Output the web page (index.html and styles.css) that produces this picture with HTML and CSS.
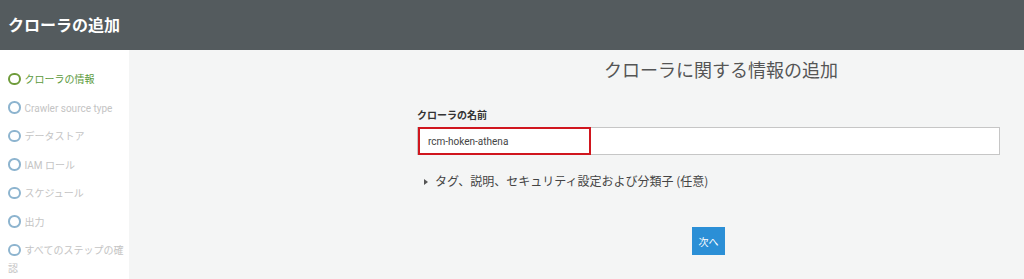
FILE: index.html
```html
<!DOCTYPE html>
<html lang="ja">
<head>
  <meta charset="UTF-8">
  <title>クローラの追加</title>
  <link rel="stylesheet" href="styles.css">
</head>
<body>
  <header class="page-header">
    <h1>クローラの追加</h1>
  </header>
  <div class="page-body">
    <nav class="steps">
      <div class="step active"><span class="dot"></span>クローラの情報</div>
      <div class="step"><span class="dot"></span>Crawler source type</div>
      <div class="step"><span class="dot"></span>データストア</div>
      <div class="step"><span class="dot"></span>IAM ロール</div>
      <div class="step"><span class="dot"></span>スケジュール</div>
      <div class="step"><span class="dot"></span>出力</div>
      <div class="step"><span class="dot"></span>すべてのステップの確認</div>
    </nav>
    <main class="content">
      <div class="form">
        <h2>クローラに関する情報の追加</h2>
        <label class="field-label">クローラの名前</label>
        <div class="field">
          <input type="text" value="rcm-hoken-athena">
          <span class="highlight"></span>
        </div>
        <div class="expander"><span class="caret"></span>タグ、説明、セキュリティ設定および分類子 (任意)</div>
        <div class="actions">
          <button class="btn-next">次へ</button>
        </div>
      </div>
    </main>
  </div>
</body>
</html>
```

FILE: styles.css
```css
body {
  margin: 0;
  font-family: "Noto Sans CJK JP", "Noto Sans", sans-serif;
  color: #444;
  background-color: #f4f5f5;
}

.page-header {
  height: 50px;
  background-color: #545b5e;
  display: flex;
  align-items: center;
  padding-left: 8px;
}

.page-header h1 {
  margin: 0;
  font-size: 16px;
  font-weight: bold;
  color: #fff;
  line-height: 1;
  margin-top: -3px;
}

.page-body {
  display: flex;
  height: 229px;
}

.steps {
  width: 121px;
  flex-shrink: 0;
  background-color: #fff;
  padding: 16px 0 0 8px;
  font-size: 10px;
}

.step {
  line-height: 18px;
  padding: 5px 0;
  margin-bottom: 0.5px;
  color: #c4c4c4;
  font-family: Roboto, "Noto Sans CJK JP", sans-serif;
}

.dot {
  display: inline-block;
  width: 8.5px;
  height: 8.5px;
  border: 2px solid #8db4cf;
  border-radius: 50%;
  margin-right: 4px;
  vertical-align: -2px;
}

.step.active {
  color: #5c9a3c;
}

.step.active .dot {
  border-color: #6e9b3a;
}

.content {
  flex: 1;
  padding: 5px 0 0 288px;
}

.form {
  width: 583px;
}

.form h2 {
  margin: 0;
  padding-left: 25px;
  text-align: center;
  font-size: 18px;
  font-weight: normal;
  line-height: 28px;
  color: #555;
}

.field-label {
  display: block;
  margin-top: 25px;
  font-size: 10px;
  font-weight: bold;
  line-height: 14px;
  color: #333;
}

.field {
  position: relative;
  margin-top: 5px;
}

.field input {
  display: block;
  width: 100%;
  height: 28px;
  box-sizing: border-box;
  border: 1px solid #c6c6c6;
  background-color: #fff;
  padding: 0 10px;
  font-family: Roboto, sans-serif;
  font-size: 10px;
  color: #444;
}

.highlight {
  position: absolute;
  left: 1px;
  top: 0;
  width: 173px;
  height: 28px;
  box-sizing: border-box;
  border: 2px solid #d0161e;
}

.expander {
  margin-top: 17px;
  padding-left: 7px;
  font-size: 12px;
  line-height: 18px;
  color: #444;
}

.caret {
  display: inline-block;
  width: 0;
  height: 0;
  border-top: 3.5px solid transparent;
  border-bottom: 3.5px solid transparent;
  border-left: 4px solid #555;
  margin-right: 7px;
  vertical-align: 1px;
}

.actions {
  display: flex;
  justify-content: center;
  margin-top: 37px;
}

.btn-next {
  width: 33px;
  height: 28px;
  border: none;
  padding: 0;
  background-color: #2b8fd6;
  color: #fff;
  font-family: "Noto Sans CJK JP", sans-serif;
  font-size: 10px;
}
```
